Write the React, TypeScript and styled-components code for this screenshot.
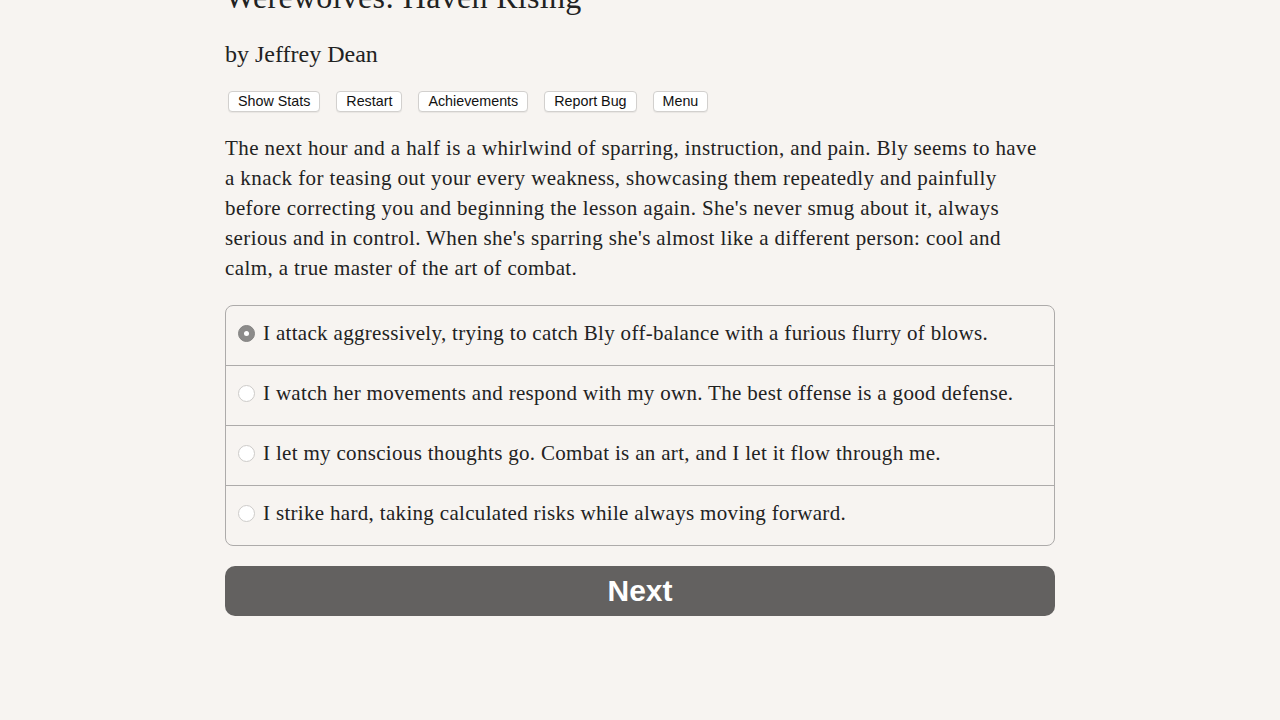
import React, { useState } from "react";
import styled, { createGlobalStyle } from "styled-components";

const Global = createGlobalStyle`
  html, body { margin: 0; padding: 0; background: #f7f4f1; }
  body { font-family: "Liberation Serif", serif; color: #222; }
`;

const Page = styled.div`
  width: 830px;
  margin: 0 auto;
`;

const Title = styled.h1`
  font-family: "Liberation Serif", serif;
  font-weight: normal;
  font-size: 32px;
  letter-spacing: 0.3px;
  line-height: 36px;
  margin: -21px 0 0 0;
  color: #222;
`;

const Author = styled.h2`
  font-family: "Liberation Serif", serif;
  font-weight: normal;
  font-size: 24px;
  line-height: 30px;
  margin: 24px 0 0 0;
  color: #222;
`;

const Toolbar = styled.div`
  display: flex;
  gap: 16px;
  margin: 22px 0 0 3px;
`;

const ToolButton = styled.button`
  font-family: "Liberation Sans", Arial, sans-serif;
  font-size: 14.3px;
  height: 21px;
  padding: 0 9px;
  background: #fff;
  color: #111;
  border: 1px solid #d2d0ce;
  border-radius: 4px;
  box-shadow: 0 1px 1px rgba(0,0,0,0.06);
  line-height: 19px;
`;

const Para = styled.p`
  font-size: 21px;
  letter-spacing: 0.4px;
  line-height: 30px;
  margin: 21px 0 0 0;
  color: #222;
`;

const Choices = styled.div`
  margin-top: 22px;
  border: 1px solid #adabaa;
  border-radius: 8px;
  overflow: hidden;
`;

const Choice = styled.label`
  display: flex;
  align-items: center;
  height: 59px;
  box-sizing: border-box;
  padding: 0 0 4px 12px;
  font-size: 21px;
  letter-spacing: 0.32px;
  color: #222;
  cursor: pointer;
  & + & { border-top: 1px solid #adabaa; height: 60px; }
`;

const Radio = styled.span<{ $checked: boolean }>`
  width: 17px;
  height: 17px;
  border-radius: 50%;
  box-sizing: border-box;
  margin-right: 8px;
  flex: none;
  position: relative;
  background: ${p => (p.$checked ? "#8c8b8a" : "#fff")};
  border: 1px solid ${p => (p.$checked ? "#858483" : "#cdcbc9")};
  ${p =>
    p.$checked
      ? `&::after { content: ""; position: absolute; left: 5px; top: 5px; width: 5px; height: 5px; border-radius: 50%; background: #fff; }`
      : ""}
`;

const NextButton = styled.button`
  display: block;
  width: 100%;
  height: 50px;
  margin-top: 20px;
  background: #636160;
  border: none;
  border-radius: 10px;
  color: #fff;
  font-family: "Liberation Sans", Arial, sans-serif;
  font-weight: bold;
  font-size: 30px;
`;

const lines = [
  "The next hour and a half is a whirlwind of sparring, instruction, and pain. Bly seems to have",
  "a knack for teasing out your every weakness, showcasing them repeatedly and painfully",
  "before correcting you and beginning the lesson again. She's never smug about it, always",
  "serious and in control. When she's sparring she's almost like a different person: cool and",
  "calm, a true master of the art of combat.",
];

const options = [
  "I attack aggressively, trying to catch Bly off-balance with a furious flurry of blows.",
  "I watch her movements and respond with my own. The best offense is a good defense.",
  "I let my conscious thoughts go. Combat is an art, and I let it flow through me.",
  "I strike hard, taking calculated risks while always moving forward.",
];

export default function App() {
  const [sel, setSel] = useState(0);
  return (
    <>
      <Global />
      <Page>
        <Title>Werewolves: Haven Rising</Title>
        <Author>by Jeffrey Dean</Author>
        <Toolbar>
          <ToolButton>Show Stats</ToolButton>
          <ToolButton>Restart</ToolButton>
          <ToolButton>Achievements</ToolButton>
          <ToolButton>Report Bug</ToolButton>
          <ToolButton>Menu</ToolButton>
        </Toolbar>
        <Para>
          {lines.map((l, i) => (
            <React.Fragment key={i}>
              {l}
              {i < lines.length - 1 && <br />}
            </React.Fragment>
          ))}
        </Para>
        <Choices>
          {options.map((o, i) => (
            <Choice key={i} onClick={() => setSel(i)}>
              <Radio $checked={sel === i} />
              {o}
            </Choice>
          ))}
        </Choices>
        <NextButton>Next</NextButton>
      </Page>
    </>
  );
}
